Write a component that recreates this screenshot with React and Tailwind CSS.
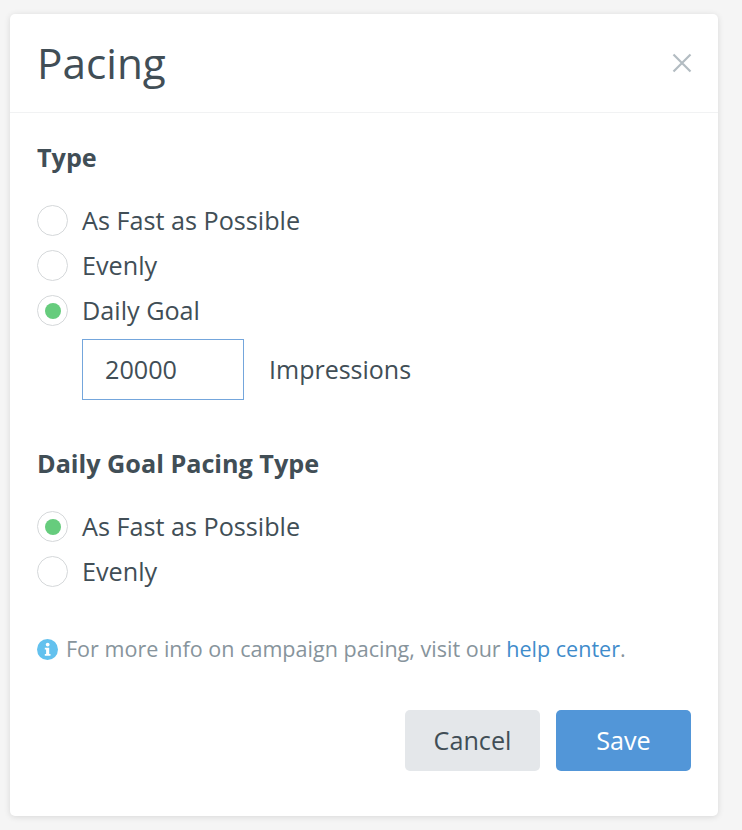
import { useState } from "react";

function Radio({ label, checked, onSelect }) {
  return (
    <label className="flex items-center h-[45px] cursor-pointer" onClick={onSelect}>
      <span className="w-[31px] h-[31px] rounded-full bg-white border border-[#d5d8da] flex items-center justify-center shrink-0">
        {checked && <span className="w-[16px] h-[16px] rounded-full bg-[#66cc7d]" />}
      </span>
      <span className="ml-[14px] pb-[2px] text-[25.2px] leading-[32px] text-[#414e56]">{label}</span>
    </label>
  );
}

export default function App() {
  const [type, setType] = useState("goal");
  const [goalType, setGoalType] = useState("fast");

  return (
    <div className="w-[742px] h-[830px] overflow-hidden bg-[#f5f5f5] pt-[14px] pl-[10px] font-['Open_Sans',sans-serif]">
      <div className="w-[708px] h-[802px] bg-white rounded-[5px] shadow-[0_1px_6px_rgba(0,0,0,0.12)]">
        {/* Header */}
        <div className="h-[99px] border-b border-[#f1f2f3] pl-[27px] pr-[26px] flex items-center justify-between">
          <h1 className="text-[42.3px] leading-[60px] text-[#414e56] font-normal">Pacing</h1>
          <button type="button" className="text-[#b3bcc2]">
            <svg width="20" height="20" viewBox="0 0 20 20" fill="none" stroke="currentColor" strokeWidth="2.2">
              <path d="M1.5 1.5 L18.5 18.5 M18.5 1.5 L1.5 18.5" />
            </svg>
          </button>
        </div>

        {/* Body */}
        <div className="pl-[27px] pr-[27px] pt-[28px]">
          <h2 className="text-[25.2px] leading-[32px] font-bold text-[#414e56]">Type</h2>
          <div className="mt-[25px]">
            <Radio label="As Fast as Possible" checked={type === "fast"} onSelect={() => setType("fast")} />
            <Radio label="Evenly" checked={type === "even"} onSelect={() => setType("even")} />
            <Radio label="Daily Goal" checked={type === "goal"} onSelect={() => setType("goal")} />
          </div>
          <div className="flex items-center ml-[45px] mt-[6px]">
            <input
              defaultValue="20000"
              className="w-[162px] h-[61px] border border-[#74a6dc] pl-[22px] pb-[2px] text-[25.2px] text-[#414e56] outline-none"
            />
            <span className="ml-[25px] text-[25px] text-[#414e56]">Impressions</span>
          </div>

          <h2 className="mt-[47px] text-[25.2px] leading-[32px] font-bold text-[#414e56]">Daily Goal Pacing Type</h2>
          <div className="mt-[25px]">
            <Radio label="As Fast as Possible" checked={goalType === "fast"} onSelect={() => setGoalType("fast")} />
            <Radio label="Evenly" checked={goalType === "even"} onSelect={() => setGoalType("even")} />
          </div>

          <p className="mt-[41px] flex items-center text-[21.55px] leading-[28px] text-[#87949c]">
            <svg width="21" height="21" viewBox="0 0 21 21" className="mr-[8px] shrink-0">
              <circle cx="10.5" cy="10.5" r="10.5" fill="#63c1ee" />
              <circle cx="10.7" cy="5.6" r="1.9" fill="#fff" />
              <path d="M7.8 8.8h4.4v6.2h1.3v1.8H7.8V15h1.3v-4.4H7.8z" fill="#fff" />
            </svg>
            <span>
              For more info on campaign pacing, visit our <a href="#" className="text-[#3f8ccb]">help center</a>.
            </span>
          </p>

          <div className="mt-[47px] flex justify-end gap-[16px]">
            <button type="button" className="w-[135px] h-[61px] rounded-[5px] bg-[#e4e7ea] text-[25.2px] text-[#414e56]">Cancel</button>
            <button type="button" className="w-[135px] h-[61px] rounded-[5px] bg-[#5296d8] text-[25.2px] text-white">Save</button>
          </div>
        </div>
      </div>
    </div>
  );
}
